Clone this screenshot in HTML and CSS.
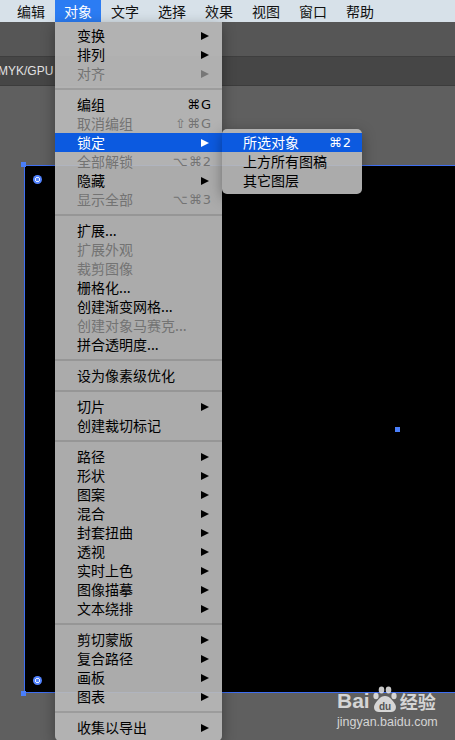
FILE: index.html
```html
<!DOCTYPE html>
<html lang="zh-CN">
<head>
    <meta charset="UTF-8">
    <meta name="viewport" content="width=device-width, initial-scale=1.0">
    <title>对象菜单</title>
    <link rel="stylesheet" href="styles.css">
</head>
<body>
    <div class="menubar">
        <span class="menubar-item">编辑</span>
        <span class="menubar-item ativo">对象</span>
        <span class="menubar-item">文字</span>
        <span class="menubar-item">选择</span>
        <span class="menubar-item">效果</span>
        <span class="menubar-item">视图</span>
        <span class="menubar-item">窗口</span>
        <span class="menubar-item">帮助</span>
    </div>

    <div class="toolbar"></div>
    <div class="tabbar"><span class="tab-titulo">MYK/GPU 预</span></div>

    <div class="area">
        <div class="prancheta">
            <span class="alca alca-topo"></span>
            <span class="alca alca-base"></span>
            <span class="alca alca-meio"></span>
            <span class="ponto ponto-topo"></span>
            <span class="ponto ponto-base"></span>
        </div>
    </div>

    <!-- menu Objeto -->
    <div class="menu menu-objeto">
        <div class="item"><span class="rotulo">变换</span><span class="seta"></span></div>
        <div class="item"><span class="rotulo">排列</span><span class="seta"></span></div>
        <div class="item off"><span class="rotulo">对齐</span><span class="seta"></span></div>
        <div class="sep"></div>
        <div class="item"><span class="rotulo">编组</span><span class="atalho">⌘G</span></div>
        <div class="item off"><span class="rotulo">取消编组</span><span class="atalho">⇧⌘G</span></div>
        <div class="item sel"><span class="rotulo">锁定</span><span class="seta"></span></div>
        <div class="item off"><span class="rotulo">全部解锁</span><span class="atalho">⌥⌘2</span></div>
        <div class="item"><span class="rotulo">隐藏</span><span class="seta"></span></div>
        <div class="item off"><span class="rotulo">显示全部</span><span class="atalho">⌥⌘3</span></div>
        <div class="sep"></div>
        <div class="item"><span class="rotulo">扩展...</span></div>
        <div class="item off"><span class="rotulo">扩展外观</span></div>
        <div class="item off"><span class="rotulo">裁剪图像</span></div>
        <div class="item"><span class="rotulo">栅格化...</span></div>
        <div class="item"><span class="rotulo">创建渐变网格...</span></div>
        <div class="item off"><span class="rotulo">创建对象马赛克...</span></div>
        <div class="item"><span class="rotulo">拼合透明度...</span></div>
        <div class="sep"></div>
        <div class="item"><span class="rotulo">设为像素级优化</span></div>
        <div class="sep"></div>
        <div class="item"><span class="rotulo">切片</span><span class="seta"></span></div>
        <div class="item"><span class="rotulo">创建裁切标记</span></div>
        <div class="sep"></div>
        <div class="item"><span class="rotulo">路径</span><span class="seta"></span></div>
        <div class="item"><span class="rotulo">形状</span><span class="seta"></span></div>
        <div class="item"><span class="rotulo">图案</span><span class="seta"></span></div>
        <div class="item"><span class="rotulo">混合</span><span class="seta"></span></div>
        <div class="item"><span class="rotulo">封套扭曲</span><span class="seta"></span></div>
        <div class="item"><span class="rotulo">透视</span><span class="seta"></span></div>
        <div class="item"><span class="rotulo">实时上色</span><span class="seta"></span></div>
        <div class="item"><span class="rotulo">图像描摹</span><span class="seta"></span></div>
        <div class="item"><span class="rotulo">文本绕排</span><span class="seta"></span></div>
        <div class="sep"></div>
        <div class="item"><span class="rotulo">剪切蒙版</span><span class="seta"></span></div>
        <div class="item"><span class="rotulo">复合路径</span><span class="seta"></span></div>
        <div class="item"><span class="rotulo">画板</span><span class="seta"></span></div>
        <div class="item"><span class="rotulo">图表</span><span class="seta"></span></div>
        <div class="sep"></div>
        <div class="item"><span class="rotulo">收集以导出</span><span class="seta"></span></div>
    </div>

    <!-- submenu Bloquear -->
    <div class="menu submenu">
        <div class="item sel"><span class="rotulo">所选对象</span><span class="atalho">⌘2</span></div>
        <div class="item"><span class="rotulo">上方所有图稿</span></div>
        <div class="item"><span class="rotulo">其它图层</span></div>
    </div>

    <div class="marca">
        <div class="marca-linha">
            <span class="marca-bai">Bai</span>
            <svg class="marca-pata" width="28" height="28" viewBox="0 0 28 28">
                <ellipse cx="5" cy="11" rx="2.6" ry="3.2"/>
                <ellipse cx="10.5" cy="5" rx="2.8" ry="3.4"/>
                <ellipse cx="17.5" cy="5" rx="2.8" ry="3.4"/>
                <ellipse cx="23" cy="11" rx="2.6" ry="3.2"/>
                <path d="M14 11 C9 11 6 16 4 19 C2 22 3 27 8 27 L20 27 C25 27 26 22 24 19 C22 16 19 11 14 11 Z"/>
                <text x="14" y="25" text-anchor="middle">du</text>
            </svg>
            <span class="marca-jy">经验</span>
        </div>
        <div class="marca-url">jingyan.baidu.com</div>
    </div>
</body>
</html>
```

FILE: styles.css
```css
* {
    box-sizing: border-box;
}

body {
    margin: 0;
    width: 455px;
    height: 740px;
    overflow: hidden;
    display: flex;
    flex-direction: column;
    position: relative;
    background: #5f5f5f;
    font-family: 'Noto Sans CJK SC', sans-serif;
}

/* Barra de menu */
.menubar {
    height: 22px;
    display: flex;
    gap: 1px;
    padding-left: 8px;
    background: #d7e1e9;
    font-size: 14px;
    line-height: 22px;
    color: #111;
}

.menubar-item {
    padding: 0 9px;
}

.menubar-item.ativo {
    background: #2b7cf3;
    color: #fff;
}

.toolbar {
    height: 35px;
    background: #565656;
    border-bottom: 1px solid #3e3e3e;
}

.tabbar {
    height: 29px;
    background: #464646;
    border-bottom: 1px solid #3c3c3c;
    font-family: 'Liberation Sans', 'Noto Sans CJK SC', sans-serif;
    font-size: 12px;
    line-height: 28px;
    color: #e2e2e2;
}

.tab-titulo {
    display: block;
    width: 56px;
    margin-left: -2px;
    white-space: nowrap;
    overflow: hidden;
}

/* Area de trabalho */
.area {
    flex: 1;
    padding: 79px 0 0 24px;
}

.prancheta {
    position: relative;
    height: 528px;
    background: #000;
    border: 1px solid #3f6ff2;
    border-right: none;
}

.alca {
    position: absolute;
    width: 5px;
    height: 5px;
    background: #4a7ffb;
}

.alca-topo {
    left: -4px;
    top: -4px;
}

.alca-base {
    left: -4px;
    bottom: -4px;
}

.alca-meio {
    left: 370px;
    top: 261px;
}

.ponto {
    position: absolute;
    left: 8px;
    width: 9px;
    height: 9px;
    border-radius: 50%;
    background: radial-gradient(circle, #5b8aff 0 1.5px, #e4ecff 1.6px 2.6px, #5384ff 2.7px);
}

.ponto-topo {
    top: 9px;
}

.ponto-base {
    bottom: 7px;
}

/* Menus */
.menu {
    position: absolute;
    background: rgba(186, 186, 186, 0.92);
    box-shadow: 0 4px 14px rgba(0, 0, 0, 0.35);
    font-size: 14px;
    line-height: 19px;
    color: #000;
}

.menu-objeto {
    left: 55px;
    top: 22px;
    width: 167px;
    padding: 4px 0;
    border-radius: 0 0 5px 5px;
}

.submenu {
    left: 222px;
    top: 129px;
    width: 140px;
    padding: 4px 0;
    border-radius: 5px;
}

.item {
    height: 19px;
    display: flex;
    align-items: center;
    padding: 0 10px 0 22px;
}

.submenu .item {
    padding-left: 21px;
}

.rotulo {
    flex: 1;
    white-space: nowrap;
}

.atalho {
    font-family: 'DejaVu Sans', sans-serif;
    font-size: 13px;
    letter-spacing: 1px;
}

.seta {
    width: 0;
    height: 0;
    margin-right: 3px;
    border-left: 8px solid #000;
    border-top: 4.5px solid transparent;
    border-bottom: 4.5px solid transparent;
}

.item.off {
    color: #737373;
}

.item.off .seta {
    border-left-color: #777;
}

.item.sel {
    background: #0c5ae0;
    color: #fff;
}

.item.sel .seta {
    border-left-color: #fff;
}

.sep {
    height: 12px;
    display: flex;
    align-items: center;
}

.sep::before {
    content: '';
    flex: 1;
    height: 2px;
    background: rgba(0, 0, 0, 0.12);
}

/* Marca d'agua */
.marca {
    position: absolute;
    left: 337px;
    top: 685px;
    color: rgba(235, 235, 235, 0.85);
    font-family: 'Liberation Sans', sans-serif;
}

.marca-linha {
    display: flex;
    align-items: flex-end;
    height: 28px;
}

.marca-bai {
    font-size: 21px;
    font-weight: bold;
    line-height: 24px;
}

.marca-pata {
    fill: rgba(235, 235, 235, 0.85);
    margin: 0 1px 0 1px;
}

.marca-pata text {
    fill: #555;
    font-family: 'Liberation Sans', sans-serif;
    font-weight: bold;
    font-size: 10px;
}

.marca-jy {
    font-family: 'Noto Sans CJK SC', sans-serif;
    font-size: 18px;
    font-weight: bold;
    line-height: 24px;
}

.marca-url {
    font-size: 12.5px;
    line-height: 16px;
    margin-top: 1px;
}
```
